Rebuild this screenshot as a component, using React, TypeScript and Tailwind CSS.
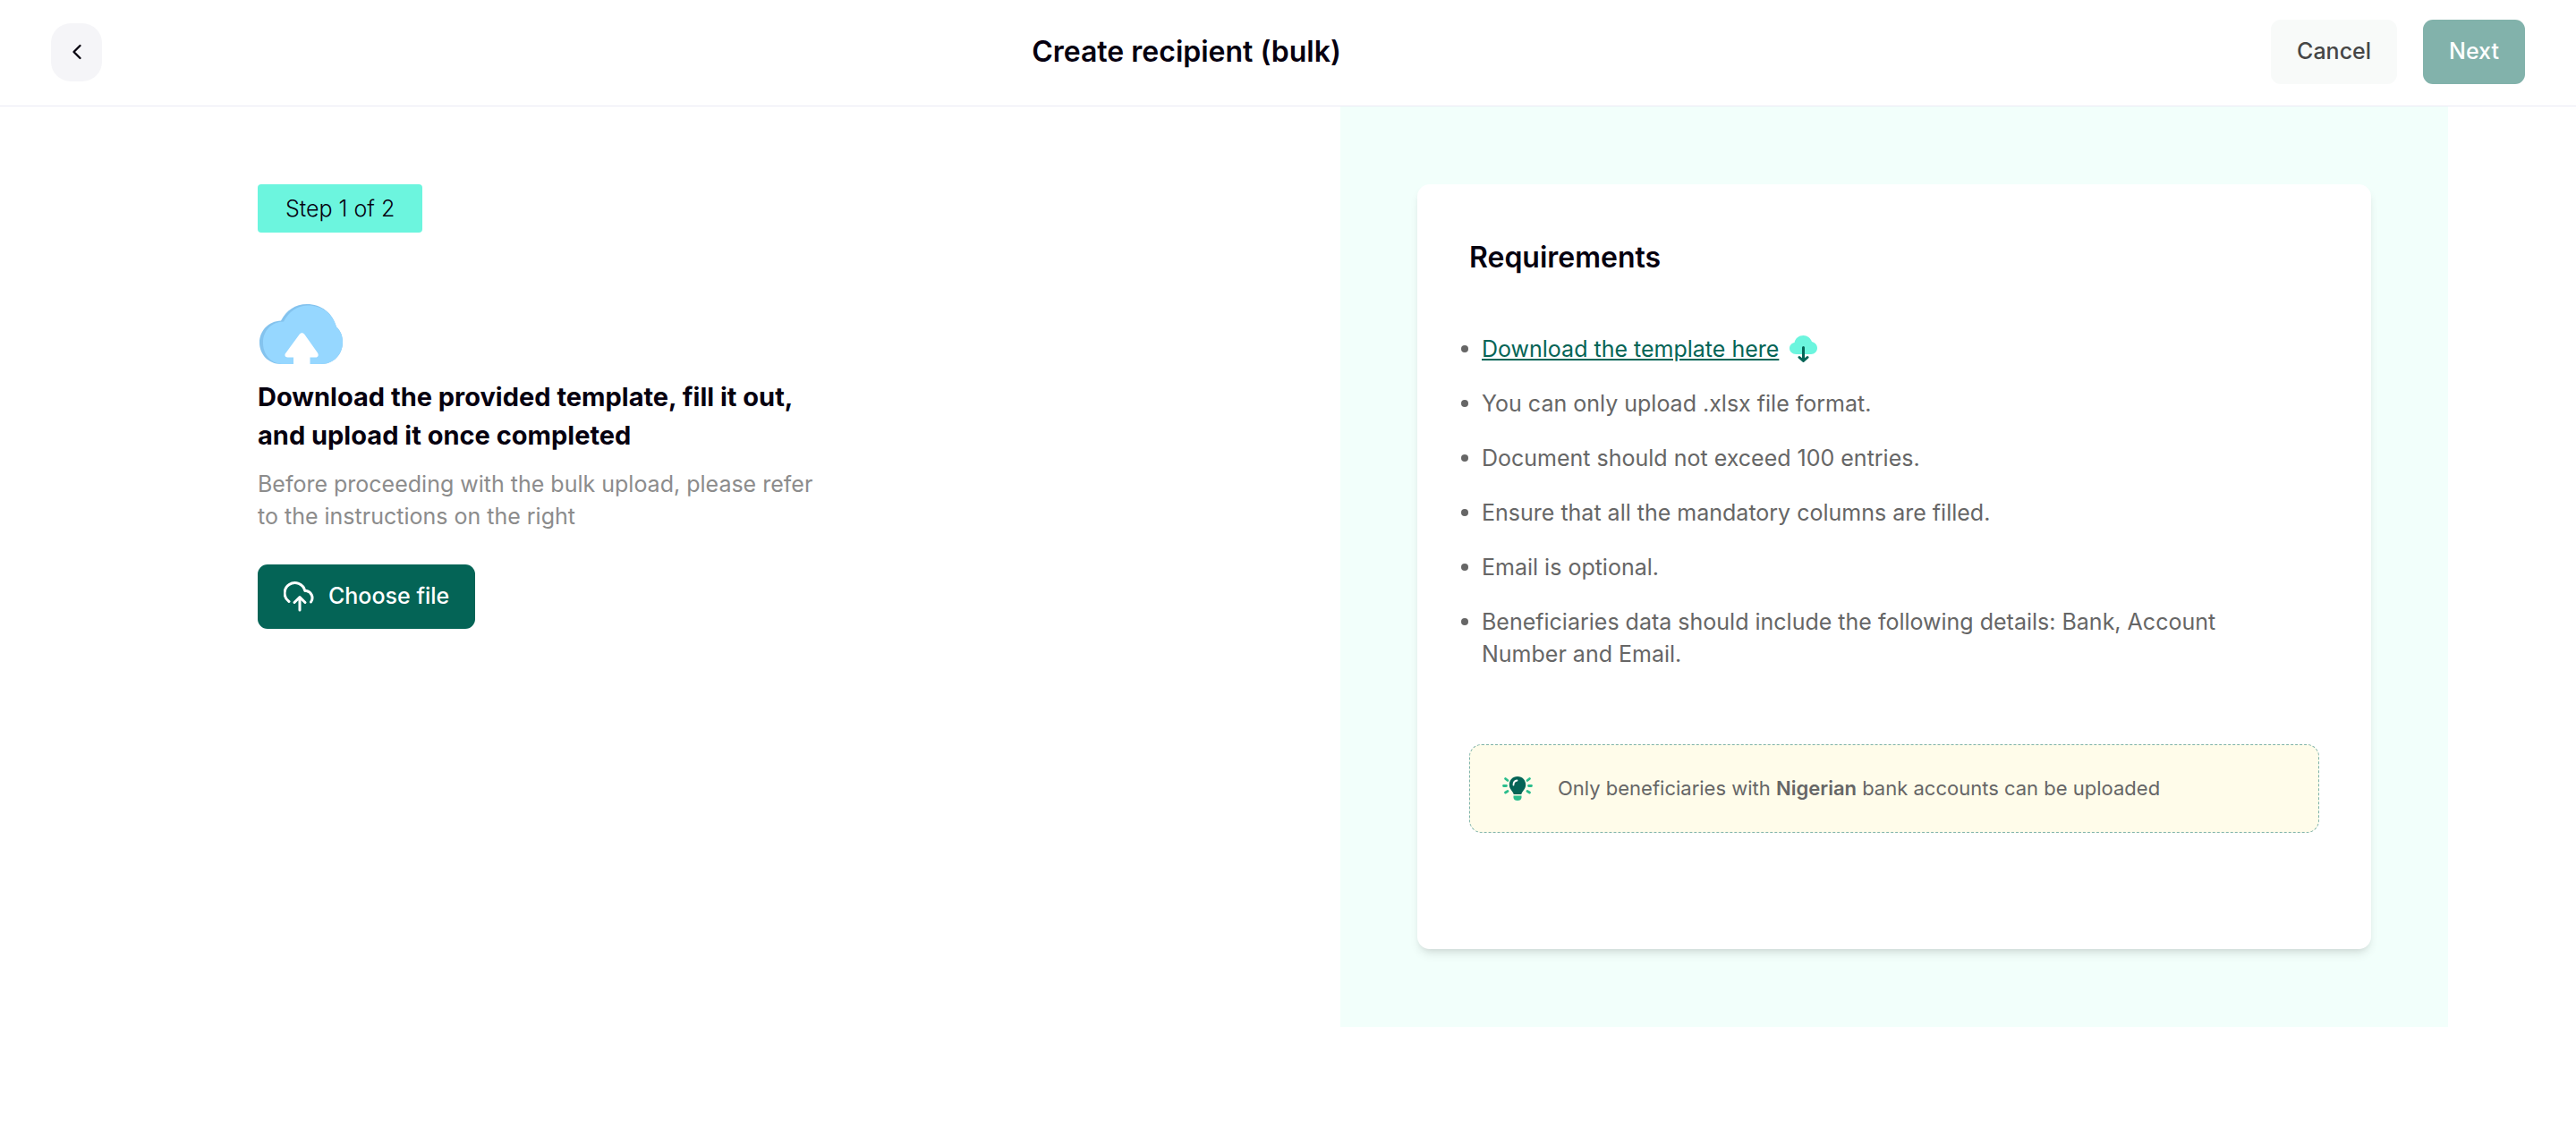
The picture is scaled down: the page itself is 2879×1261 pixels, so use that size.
import type { ReactNode } from 'react';
import { ChevronLeft } from 'lucide-react';

const requirements = [
  'You can only upload .xlsx file format.',
  'Document should not exceed 100 entries.',
  'Ensure that all the mandatory columns are filled.',
  'Email is optional.',
  'Beneficiaries data should include the following details: Bank, Account Number and Email.',
];

function CloudUploadArt() {
  return (
    <svg className="block" width="94" height="68" viewBox="0 0 94 68" aria-hidden="true">
      <path
        d="M24 67C10 67 0 56 0 43C0 30 10 19 24 18.500C30 7 40 0 53 0C69 0 82 10 86 25.500C91 30 93 36 93 42.500C93 56 83 67 69 67Z"
        fill="#84c3ee"
      />
      <path
        d="M25 67C12 66 4 56 4 43C4 30 13 20 27 19.500C33 8 42 2 53 1.500C69 1 82 10 86 25.500C91 30 93 36 93 42.500C93 56 83 67 69 67Z"
        fill="#96d7ff"
      />
      <path
        d="M38 68V59.500H31.500C28.500 59.500 27.500 56.500 29.500 54.500L44.500 34C46 31.600 49 31.600 50.500 34L65 54.500C66.500 57 65.500 59.500 63 59.500H56.500V68Z"
        fill="#fff"
      />
    </svg>
  );
}

function UploadIcon() {
  return (
    <svg
      width="36"
      height="36"
      viewBox="0 0 36 36"
      fill="none"
      stroke="currentColor"
      strokeWidth="3"
      strokeLinecap="round"
      strokeLinejoin="round"
      aria-hidden="true"
    >
      <path d="M6 23.500A11.500 11.500 0 1 1 23.800 11.500H25.500A8 8 0 0 1 30.500 24" />
      <path d="M18 33V19M12 24.500L18 18.500L24 24.500" />
    </svg>
  );
}

function TemplateIcon() {
  return (
    <svg width="31" height="30" viewBox="0 0 31 30" aria-hidden="true">
      <path
        d="M7.500 21C3 21 0 18 0 14.500C0 11 2.500 8.500 5.500 8C6.500 3 10.500 0 15.500 0C20 0 23.500 3 25 7C28.500 8 31 10.500 31 14C31 18 28 21 24 21Z"
        fill="#6cf5de"
      />
      <path
        d="M15.500 13.500V28M11 24.500L15.500 28.500L20 24.500"
        fill="none"
        stroke="#046456"
        strokeWidth="3"
        strokeLinecap="round"
        strokeLinejoin="round"
      />
    </svg>
  );
}

function BulbIcon() {
  return (
    <svg className="shrink-0" width="34" height="28" viewBox="0 0 34 28" aria-hidden="true">
      <path
        d="M3.500 2.500L6 4.500M30.500 2.500L28 4.500M1.500 10.500H4.500M29.500 10.500H32.500M3.500 18L6 16.500M30.500 18L28 16.500"
        stroke="#2bbd8c"
        strokeWidth="2.800"
        strokeLinecap="round"
      />
      <path
        d="M17 0C11.500 0 7.800 4.200 7.800 9.200C7.800 13.500 10.500 15.500 12 18C12.500 19.500 12.500 20 13.500 20H20.500C21.500 20 21.500 19.500 22 18C23.500 15.500 26.200 13.500 26.200 9.200C26.200 4.200 22.500 0 17 0Z"
        fill="#046456"
      />
      <path d="M12.500 9.500C12.500 6.500 14 4.800 16.500 4.500" stroke="#fff" strokeWidth="1.800" strokeLinecap="round" fill="none" />
      <path d="M12.500 21.500H21.500V23.500C21.500 26 19.500 27 17 27C14.500 27 12.500 26 12.500 23.500Z" fill="#2bbd8c" />
    </svg>
  );
}

function Requirement({ children }: { children: ReactNode }) {
  return (
    <li className="flex gap-[15px]">
      <span className="flex h-9 items-center">
        <span className="size-2 rounded-full bg-[#666]" />
      </span>
      <span>{children}</span>
    </li>
  );
}

function Header() {
  return (
    <header className="flex items-center justify-between border-b border-[#ebebf5] px-[57px] pt-[22px] pb-6">
      <button
        type="button"
        aria-label="Go back"
        className="flex h-[65px] w-[57px] items-center justify-center rounded-[22px] bg-[#f5f5f8]"
      >
        <ChevronLeft className="size-7" strokeWidth={2} />
      </button>
      <h1 className="text-[32px] font-semibold">Create recipient (bulk)</h1>
      <div className="flex gap-[29px] text-[25px] font-medium">
        <button type="button" className="h-[72px] rounded-[11px] bg-[#f8faf9] px-[29px] text-[#464646]">
          Cancel
        </button>
        <button type="button" className="h-[72px] rounded-[11px] bg-[#82b2ab] px-[29px] text-white">
          Next
        </button>
      </div>
    </header>
  );
}

export default function App() {
  return (
    <div className="min-h-screen bg-white font-['Inter',sans-serif] text-[#06000f]">
      <Header />
      <main className="mr-[143px] ml-36 grid grid-cols-2 gap-[116px]">
        <section className="flex flex-col items-start pt-[87px] pl-36">
          <span className="rounded-[4px] bg-[#6cf5de] px-[31px] py-[9px] text-[25px] leading-9 font-light">
            Step 1 of 2
          </span>
          <div className="mt-20 ml-[2px]">
            <CloudUploadArt />
          </div>
          <h2 className="mt-[14px] max-w-[640px] text-[29px] leading-[43px] font-bold">
            Download the provided template, fill it out, and upload it once completed
          </h2>
          <p className="mt-[15px] max-w-[640px] text-[25px] leading-9 text-[#8c8c8c]">
            Before proceeding with the bulk upload, please refer to the instructions on the right
          </p>
          <button
            type="button"
            className="mt-9 flex h-[72px] items-center gap-[14px] rounded-[11px] bg-[#046456] px-[29px] text-[25px] font-medium text-white"
          >
            <UploadIcon />
            Choose file
          </button>
        </section>

        <section className="bg-[#f2fffb] px-[86px] py-[87px]">
          <div className="rounded-[14px] bg-white px-[58px] pt-[58px] pb-[130px] shadow-[0_7px_11px_-2px_rgba(0,0,0,0.1),0_4px_7px_-4px_rgba(0,0,0,0.1)]">
            <h2 className="text-[32px] leading-[48px] font-semibold">Requirements</h2>
            <ul className="mt-[60px] ml-[-9px] flex flex-col gap-[25px] pr-20 text-[25px] leading-9 text-[#666]">
              <Requirement>
                <span className="flex items-center gap-3">
                  <a href="#template" className="text-[#046456] underline">
                    Download the template here
                  </a>
                  <TemplateIcon />
                </span>
              </Requirement>
              {requirements.map((text) => (
                <Requirement key={text}>{text}</Requirement>
              ))}
            </ul>
            <div className="mt-[83px] flex items-center gap-7 rounded-[14px] border border-dashed border-[#7fb3a9] bg-[#fffcea] px-9 py-8 text-[22px] leading-[33px] text-[#666]">
              <BulbIcon />
              <p>
                Only beneficiaries with <strong className="font-semibold">Nigerian</strong> bank accounts can be
                uploaded
              </p>
            </div>
          </div>
        </section>
      </main>
    </div>
  );
}
